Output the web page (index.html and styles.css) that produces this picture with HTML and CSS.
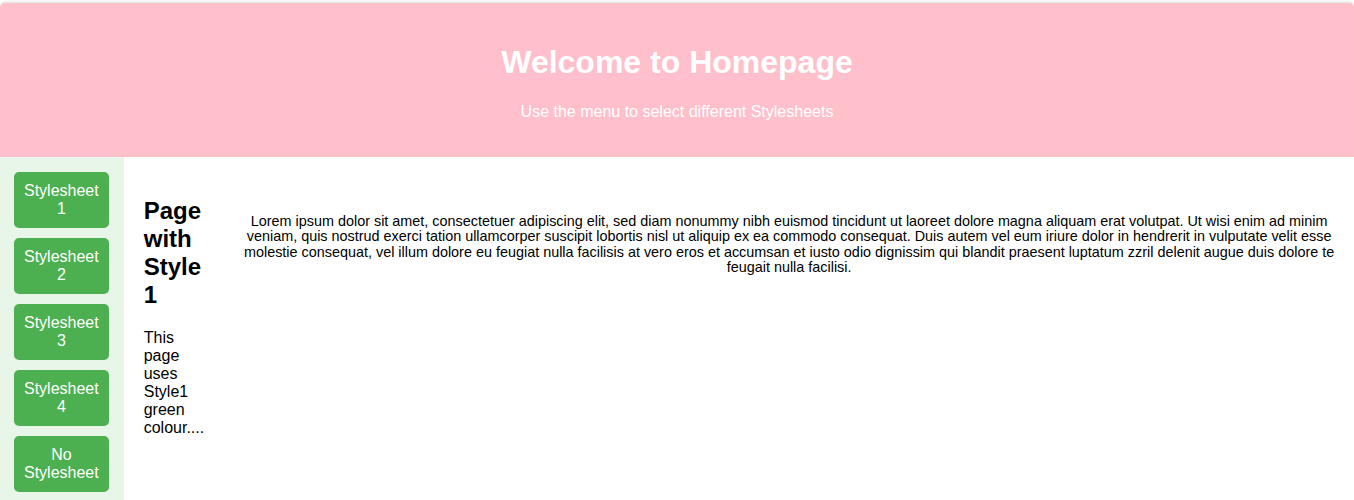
FILE: index.html
```html
<!DOCTYPE html>
<html lang="en">
<head>
<meta charset="utf-8">
<title>Homepage</title>
<link rel="stylesheet" href="styles.css">
</head>
<body>
<header class="site-header">
  <h1 class="site-title">Welcome to Homepage</h1>
  <p class="site-subtitle">Use the menu to select different Stylesheets</p>
</header>
<div class="layout">
  <nav class="sidebar">
    <button class="style-btn">Stylesheet 1</button>
    <button class="style-btn">Stylesheet 2</button>
    <button class="style-btn">Stylesheet 3</button>
    <button class="style-btn">Stylesheet 4</button>
    <button class="style-btn">No Stylesheet</button>
  </nav>
  <main class="content">
    <article class="intro">
      <h2 class="intro-title">Page with Style 1</h2>
      <p class="intro-text">This page uses Style1 green colour....</p>
    </article>
    <section class="lorem">
      <p class="lorem-text">Lorem ipsum dolor sit amet, consectetuer adipiscing elit, sed diam nonummy nibh euismod tincidunt ut laoreet dolore magna aliquam erat volutpat. Ut wisi enim ad minim veniam, quis nostrud exerci tation ullamcorper suscipit lobortis nisl ut aliquip ex ea commodo consequat. Duis autem vel eum iriure dolor in hendrerit in vulputate velit esse molestie consequat, vel illum dolore eu feugiat nulla facilisis at vero eros et accumsan et iusto odio dignissim qui blandit praesent luptatum zzril delenit augue duis dolore te feugait nulla facilisi.</p>
    </section>
  </main>
</div>
</body>
</html>
```

FILE: styles.css
```css
html, body {
  margin: 0;
  padding: 0;
  background: #ffffff;
  font-family: "Liberation Sans", Arial, sans-serif;
  color: #000000;
}

.site-header {
  margin-top: 3px;
  background: #ffc0cb;
  color: #ffffff;
  text-align: center;
  padding: 20px;
  border-radius: 5px 5px 0 0;
  box-shadow: 0 -1px 3px rgba(0, 0, 0, 0.15);
}

.site-title {
  font-size: 32px;
  font-weight: bold;
  margin: 0.67em 0;
}

.site-subtitle {
  font-size: 16px;
  margin: 16px 0;
}

.layout {
  display: flex;
  align-items: stretch;
  min-height: 344px;
}

.sidebar {
  background: #e8f5e9;
  padding: 15px 15px 15px 14px;
  width: min-content;
  display: flex;
  flex-direction: column;
  gap: 10px;
  flex: none;
}

.style-btn {
  display: block;
  background: #4caf50;
  color: #ffffff;
  border: none;
  border-radius: 5px;
  padding: 10px;
  font-family: "Liberation Sans", Arial, sans-serif;
  font-size: 16px;
  line-height: 18px;
  text-align: center;
  cursor: pointer;
}

.content {
  flex: 1;
  display: flex;
  align-items: flex-start;
  gap: 20px;
  padding: 20px 0 20px 20px;
}

.intro {
  width: min-content;
  flex: none;
}

.intro-title {
  font-size: 24px;
  font-weight: bold;
  margin: 20px 0;
}

.intro-text {
  font-size: 16px;
  margin: 16px 0;
  line-height: 18px;
}

.lorem {
  flex: 1;
  padding: 0 10px;
}

.lorem-text {
  font-size: 14.4px;
  line-height: 15.5px;
  text-align: center;
  margin: 37px 0 15px;
}
```
